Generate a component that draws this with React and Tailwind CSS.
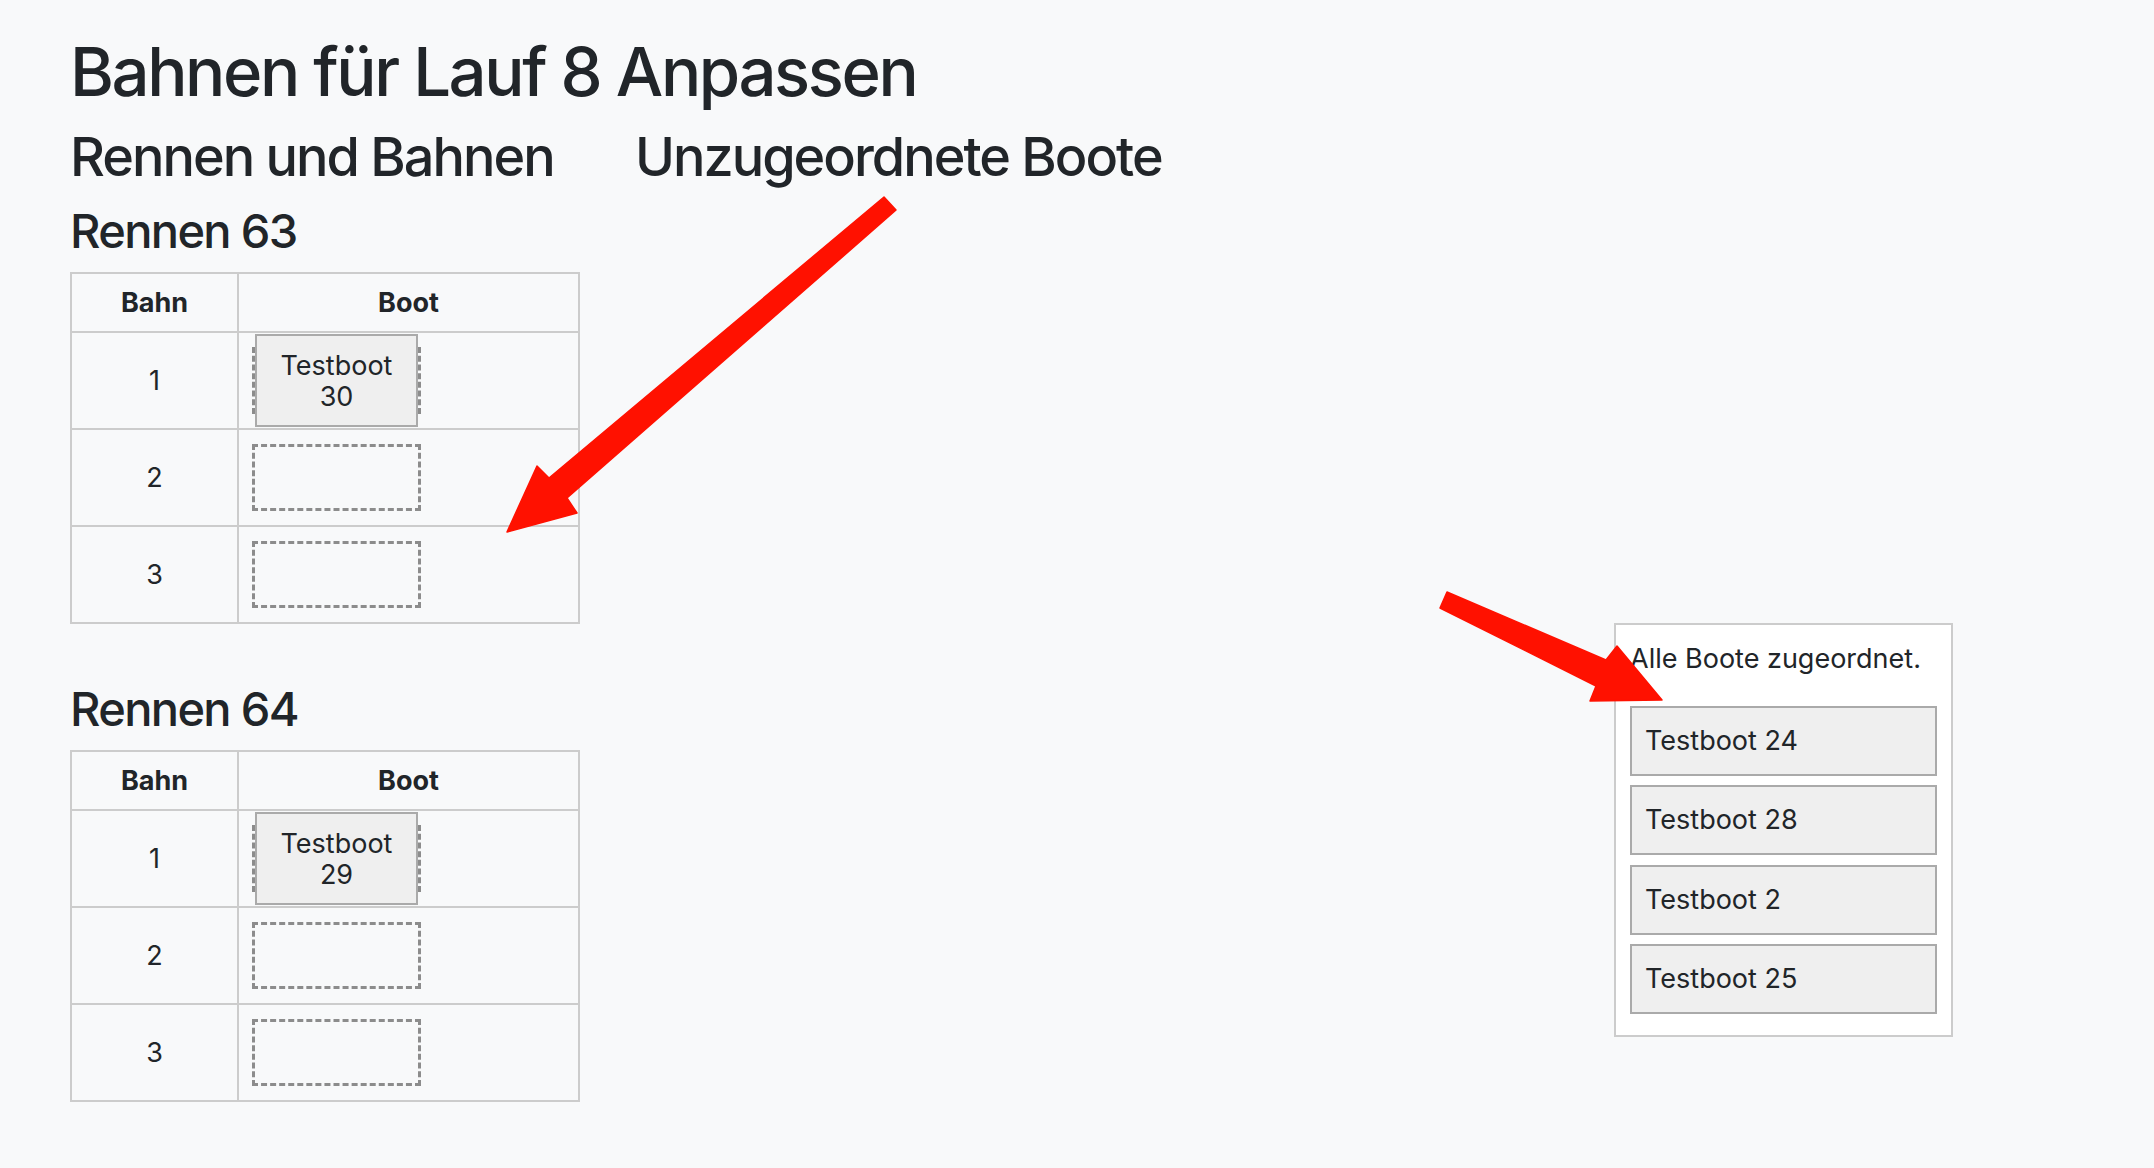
import React from 'react';

const races = [
	{ name: 'Rennen 63', lanes: [{ lane: 1, boat: ['Testboot', '30'] }, { lane: 2 }, { lane: 3 }] },
	{ name: 'Rennen 64', lanes: [{ lane: 1, boat: ['Testboot', '29'] }, { lane: 2 }, { lane: 3 }] },
];

const unassigned = ['Testboot 24', 'Testboot 28', 'Testboot 2', 'Testboot 25'];

function RaceTable({ race, first }) {
	return (
		<div className={first ? '' : 'mt-[57px]'}>
			<h3 className="text-[47px] leading-[56px] font-medium tracking-[-0.035em] whitespace-nowrap mb-[13px]">{race.name}</h3>
			<div className="w-[510px] border-l-2 border-t-2 border-[#cccccc]">
				<div className="flex">
					<div className="w-[167px] h-[59px] border-r-2 border-b-2 border-[#cccccc] flex items-center justify-center font-bold">Bahn</div>
					<div className="w-[341px] h-[59px] border-r-2 border-b-2 border-[#cccccc] flex items-center justify-center font-bold">Boot</div>
				</div>
				{race.lanes.map((l) => (
					<div key={l.lane} className="flex">
						<div className="w-[167px] h-[97px] border-r-2 border-b-2 border-[#cccccc] flex items-center justify-center">{l.lane}</div>
						<div className="w-[341px] h-[97px] border-r-2 border-b-2 border-[#cccccc] flex items-center pl-[13px]">
							<div className="w-[169px] h-[67px] border-[3px] border-dashed border-[#8c8c8c] flex items-center justify-center">
								{l.boat && (
									<div className="shrink-0 w-[163px] h-[93px] border-2 border-[#aaaaaa] bg-[#efefef] flex flex-col items-center justify-center leading-[31px]">
										<span>{l.boat[0]}</span>
										<span>{l.boat[1]}</span>
									</div>
								)}
							</div>
						</div>
					</div>
				))}
			</div>
		</div>
	);
}

export default function App() {
	return (
		<div className="relative w-full min-h-screen bg-[#f8f9fa] text-[#212529] font-['Inter','Noto_Sans',sans-serif] text-[27px] leading-[40px] pt-[32px] pl-[70px]">
			<h1 className="text-[67px] leading-[80px] font-medium tracking-[-0.036em] whitespace-nowrap mb-[13px]">Bahnen für Lauf 8 Anpassen</h1>

			<div className="flex gap-[55px]">
				<div className="w-[510px]">
					<h2 className="text-[54px] leading-[64px] font-medium tracking-[-0.037em] whitespace-nowrap mb-[14px]">Rennen und Bahnen</h2>
					{races.map((r, i) => (
						<RaceTable key={r.name} race={r} first={i === 0} />
					))}
				</div>

				<div className="flex-1">
					<h2 className="text-[54px] leading-[64px] font-medium tracking-[-0.037em] whitespace-nowrap">Unzugeordnete Boote</h2>
					<div className="mt-[434px] ml-[979px] w-[339px] bg-white border-2 border-[#cccccc] pt-[14px] px-[14px] pb-[21px]">
						<p className="mb-[27px] whitespace-nowrap">Alle Boote zugeordnet.</p>
						<div className="flex flex-col gap-[9.33px]">
							{unassigned.map((b) => (
								<div key={b} className="h-[70px] border-2 border-[#aaaaaa] bg-[#efefef] flex items-center pl-[13px]">{b}</div>
							))}
						</div>
					</div>
				</div>
			</div>

			<svg className="absolute top-0 left-0 w-full h-full pointer-events-none" viewBox="0 0 2154 1168" preserveAspectRatio="xMinYMin meet">
				<polygon
					points="884,197 549,478 537,466 507,532 577,513 567,498 896,210"
					fill="#ff1100"
					stroke="#ff1100"
					strokeWidth="1.5"
					strokeLinejoin="round"
				/>
				<polygon
					points="1447,592 1606,660 1617,646 1662,700 1590,701 1596,686 1440,608"
					fill="#ff1100"
					stroke="#ff1100"
					strokeWidth="1.5"
					strokeLinejoin="round"
				/>
			</svg>
		</div>
	);
}
